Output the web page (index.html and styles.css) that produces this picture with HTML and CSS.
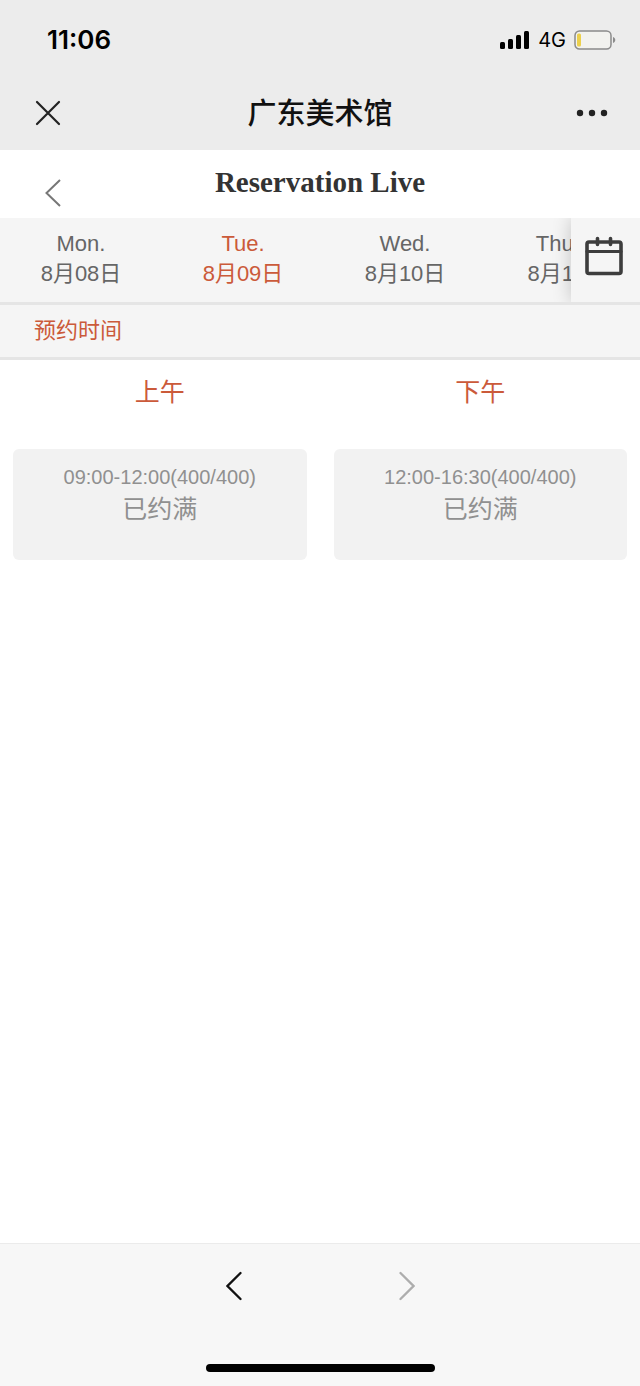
FILE: index.html
```html
<!DOCTYPE html>
<html lang="zh-CN">
<head>
    <meta charset="utf-8">
    <meta name="viewport" content="width=device-width, initial-scale=1">
    <title>广东美术馆</title>
    <link rel="stylesheet" href="styles.css">
</head>
<body>
    <header class="top">
        <div class="status">
            <span class="clock">11:06</span>
            <div class="status-icons">
                <svg width="30" height="18" viewBox="0 0 30 18">
                    <rect x="0" y="11" width="5" height="7" rx="1.5"/>
                    <rect x="8" y="8" width="5" height="10" rx="1.5"/>
                    <rect x="16" y="4" width="5" height="14" rx="1.5"/>
                    <rect x="24" y="0" width="5" height="18" rx="1.5"/>
                </svg>
                <span class="network">4G</span>
                <svg width="42" height="20" viewBox="0 0 42 20">
                    <rect x="1" y="1" width="36" height="18" rx="4.5" fill="#f2f2ef" stroke="#8b8b8b" stroke-width="1.5"/>
                    <rect x="3" y="3.5" width="4" height="13" rx="1.5" fill="#ecd04c"/>
                    <path d="M39 7v6c3-1 3-5 0-6z" fill="#8b8b8b"/>
                </svg>
            </div>
        </div>
        <div class="nav">
            <button class="icon-button" aria-label="关闭">
                <svg width="32" height="26" viewBox="0 0 32 26" fill="none" stroke="#222" stroke-width="2.2" stroke-linecap="round">
                    <path d="M5 2l22 22M27 2L5 24"/>
                </svg>
            </button>
            <span class="nav-title">广东美术馆</span>
            <button class="icon-button more" aria-label="更多">
                <svg width="32" height="8" viewBox="0 0 32 8" fill="#222">
                    <circle cx="4" cy="4" r="3.2"/>
                    <circle cx="16" cy="4" r="3.2"/>
                    <circle cx="28" cy="4" r="3.2"/>
                </svg>
            </button>
        </div>
    </header>

    <main>
        <div class="page-head">
            <button class="icon-button back" aria-label="返回">
                <svg width="16" height="28" viewBox="0 0 16 28" fill="none" stroke="#777" stroke-width="2">
                    <path d="M15 1L1.5 14L15 27"/>
                </svg>
            </button>
            <h1>Reservation Live</h1>
        </div>

        <div class="date-bar">
            <div class="days">
                <button class="day">Mon.<br>8月08日</button>
                <button class="day active">Tue.<br>8月09日</button>
                <button class="day">Wed.<br>8月10日</button>
                <button class="day">Thurs.<br>8月11日</button>
            </div>
            <button class="calendar" aria-label="日历">
                <svg width="38" height="40" viewBox="0 0 38 40" fill="none" stroke="#3d3d3d" stroke-linecap="round">
                    <rect x="2" y="6" width="34" height="31.5" rx="2" stroke-width="3.6"/>
                    <path d="M2 15.5h34" stroke-width="3"/>
                    <path d="M12.5 2.5v6M25.5 2.5v6" stroke-width="3.6"/>
                </svg>
            </button>
        </div>

        <h2 class="section-title">预约时间</h2>

        <div class="slots">
            <section>
                <h3>上午</h3>
                <button class="slot" disabled>
                    <span class="time">09:00-12:00(400/400)</span>
                    <span class="state">已约满</span>
                </button>
            </section>
            <section>
                <h3>下午</h3>
                <button class="slot" disabled>
                    <span class="time">12:00-16:30(400/400)</span>
                    <span class="state">已约满</span>
                </button>
            </section>
        </div>
    </main>

    <footer class="toolbar">
        <div class="history">
            <button class="icon-button" aria-label="后退">
                <svg width="16" height="30" viewBox="0 0 16 30" fill="none" stroke="#111" stroke-width="2.3" stroke-linecap="round">
                    <path d="M14.5 2L1.5 15L14.5 28"/>
                </svg>
            </button>
            <button class="icon-button" aria-label="前进" disabled>
                <svg width="16" height="30" viewBox="0 0 16 30" fill="none" stroke="#adadad" stroke-width="2.3" stroke-linecap="round">
                    <path d="M1.5 2L14.5 15L1.5 28"/>
                </svg>
            </button>
        </div>
        <div class="home-bar"></div>
    </footer>
</body>
</html>
```
FILE: styles.css
```css
:root {
    --accent-color: #cb5a3a;
    --bar-color: #f5f5f5;
    --line-color: #e5e5e5;
}

* {
    box-sizing: border-box;
}

body {
    margin: 0;
    min-height: 100vh;
    display: flex;
    flex-direction: column;
    background: #fff;
    font-family: "Liberation Sans", "Noto Sans CJK SC", sans-serif;
    color: #666;
}

button {
    margin: 0;
    padding: 0;
    border: none;
    background: none;
    font-family: inherit;
    color: inherit;
}

svg {
    display: block;
}

h1,
h2,
h3 {
    margin: 0;
    font-weight: normal;
}

.top {
    background: #ececec;
    color: #111;
}

.status {
    display: flex;
    justify-content: space-between;
    align-items: center;
    height: 79px;
    padding: 0 24px 0 47px;
    font-family: Inter, sans-serif;
    color: #000;
}

.clock {
    font-size: 26px;
    font-weight: 600;
}

.status-icons {
    display: flex;
    align-items: center;
    gap: 8px;
}

.network {
    font-size: 20px;
}

.nav {
    display: grid;
    grid-template-columns: 1fr auto 1fr;
    align-items: center;
    height: 71px;
    padding: 0 32px 4px;
}

.nav-title {
    padding-top: 2px;
    font-size: 29px;
    line-height: 40px;
    font-weight: 500;
}

.icon-button {
    justify-self: start;
}

.more {
    justify-self: end;
}

.page-head {
    display: grid;
    grid-template-columns: 1fr auto 1fr;
    align-items: center;
    height: 68px;
    padding: 0 45px;
}

.back {
    padding-top: 17px;
}

h1 {
    padding-bottom: 4px;
    font-family: "Liberation Serif", serif;
    font-size: 29px;
    font-weight: bold;
    color: #333;
}

.date-bar {
    display: flex;
    background: var(--bar-color);
    border-bottom: 3px solid var(--line-color);
}

.days {
    flex: 1;
    display: flex;
    overflow: hidden;
}

.day {
    flex: 0 0 162px;
    padding: 11px 0 13px;
    font-size: 22px;
    line-height: 30px;
}

.active {
    color: var(--accent-color);
}

.calendar {
    position: relative;
    flex: 0 0 69px;
    display: flex;
    align-items: center;
    padding: 0 14px 8px;
    background: var(--bar-color);
    box-shadow: 0 0 18px rgba(0, 0, 0, 0.2);
    clip-path: inset(0 0 0 -24px);
}

.section-title {
    padding: 0 34px;
    background: var(--bar-color);
    border-bottom: 3px solid var(--line-color);
    font-size: 22px;
    line-height: 52px;
    color: var(--accent-color);
}

.slots {
    display: grid;
    grid-template-columns: 1fr 1fr;
    gap: 27px;
    padding: 0 13px;
}

h3 {
    margin-bottom: 25px;
    font-size: 25px;
    line-height: 64px;
    text-align: center;
    color: var(--accent-color);
}

.slot {
    display: flex;
    flex-direction: column;
    align-items: center;
    width: 100%;
    padding: 12px 0 35px;
    border-radius: 6px;
    background: #f2f2f2;
    color: #909090;
    line-height: 32px;
}

.time {
    font-size: 20px;
}

.state {
    font-size: 25px;
}

.toolbar {
    display: flex;
    flex-direction: column;
    justify-content: space-between;
    align-items: center;
    height: 143px;
    margin-top: auto;
    padding: 27px 0 14px;
    border-top: 1px solid #ebebeb;
    background: #f7f7f7;
}

.history {
    display: flex;
    gap: 157px;
}

.home-bar {
    width: 229px;
    height: 8px;
    border-radius: 4px;
    background: #000;
}
```
